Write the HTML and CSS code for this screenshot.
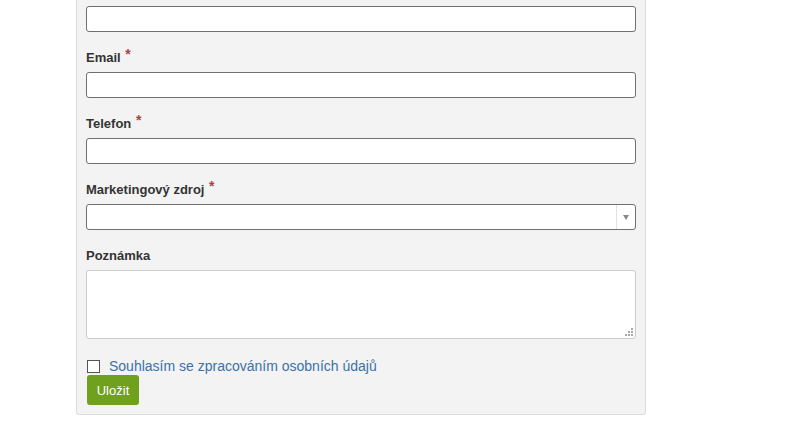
FILE: index.html
```html
<!DOCTYPE html>
<html lang="cs">
<head>
<meta charset="utf-8">
<link rel="stylesheet" href="styles.css">
</head>
<body>
<div class="page">
  <form class="panel">
    <div class="group first">
      <input class="field" type="text">
    </div>
    <div class="group">
      <label class="lbl">Email <span class="req">*</span></label>
      <input class="field" type="text">
    </div>
    <div class="group">
      <label class="lbl">Telefon <span class="req">*</span></label>
      <input class="field" type="text">
    </div>
    <div class="group">
      <label class="lbl">Marketingový zdroj <span class="req">*</span></label>
      <div class="select">
        <span class="select-arrow"><span class="tri"></span></span>
      </div>
    </div>
    <div class="group">
      <label class="lbl">Poznámka</label>
      <div class="area-wrap">
        <textarea class="area"></textarea>
        <span class="grip"></span>
      </div>
    </div>
    <div class="check-row">
      <input class="cb" type="checkbox" id="agree">
      <label class="cb-lbl" for="agree">Souhlasím se zpracováním osobních údajů</label>
    </div>
    <button class="btn" type="button">Uložit</button>
  </form>
</div>
</body>
</html>
```
FILE: styles.css
```css
html, body {
  margin: 0;
  padding: 0;
  background: #ffffff;
  font-family: "Liberation Sans", Arial, sans-serif;
}
.page {
  padding-left: 76px;
}
.panel {
  width: 549px;
  background: #f3f3f3;
  border: 1px solid #dddddd;
  border-top: none;
  border-radius: 0 0 3px 3px;
  padding: 6px 10px 9px 9px;
  display: flex;
  flex-direction: column;
  align-items: flex-start;
}
.group {
  width: 100%;
  display: flex;
  flex-direction: column;
  margin-bottom: 17px;
}
.lbl {
  font-size: 13px;
  font-weight: bold;
  color: #333333;
  line-height: 18px;
  height: 18px;
  margin-bottom: 5px;
}
.req {
  color: #a94442;
  position: relative;
  top: -3px;
  margin-left: 1px;
  font-size: 14px;
  line-height: 0;
}
.field {
  box-sizing: border-box;
  width: 550px;
  height: 26px;
  margin: 0;
  border: 1px solid #707070;
  border-radius: 3px;
  background: #ffffff;
  padding: 2px 6px;
  font: 13px "Liberation Sans", Arial, sans-serif;
}
.select {
  box-sizing: border-box;
  width: 550px;
  height: 26px;
  border: 1px solid #707070;
  border-radius: 3px;
  background: #ffffff;
  display: flex;
  justify-content: flex-end;
}
.select-arrow {
  width: 18px;
  border-left: 1px solid #e2e2e2;
  display: flex;
  align-items: center;
  justify-content: center;
}
.tri {
  width: 0;
  height: 0;
  border-left: 3px solid transparent;
  border-right: 3px solid transparent;
  border-top: 5px solid #888888;
}
.area-wrap {
  position: relative;
  width: 550px;
  height: 69px;
}
.area {
  box-sizing: border-box;
  width: 550px;
  height: 69px;
  margin: 0;
  border: 1px solid #cccccc;
  border-radius: 3px;
  background: #ffffff;
  display: block;
  resize: none;
}
.grip {
  position: absolute;
  right: 3px;
  bottom: 3px;
  width: 8px;
  height: 8px;
  background:
    linear-gradient(#a8a8a8, #a8a8a8) 6px 0 / 2px 2px no-repeat,
    linear-gradient(#a8a8a8, #a8a8a8) 3px 3px / 2px 2px no-repeat,
    linear-gradient(#a8a8a8, #a8a8a8) 6px 3px / 2px 2px no-repeat,
    linear-gradient(#a8a8a8, #a8a8a8) 0 6px / 2px 2px no-repeat,
    linear-gradient(#a8a8a8, #a8a8a8) 3px 6px / 2px 2px no-repeat,
    linear-gradient(#a8a8a8, #a8a8a8) 6px 6px / 2px 2px no-repeat;
}
.check-row {
  display: flex;
  align-items: center;
  height: 18px;
  margin-top: 1px;
}
.cb {
  appearance: none;
  -webkit-appearance: none;
  box-sizing: border-box;
  width: 13px;
  height: 13px;
  margin: 0 9px 0 1px;
  border: 1px solid #555555;
  background: #ffffff;
  border-radius: 0;
}
.cb-lbl {
  font-size: 14px;
  color: #3a72a5;
  line-height: 18px;
}
.btn {
  height: 30px;
  width: 52px;
  margin: 0 0 0 1px;
  padding: 0;
  border: none;
  border-radius: 3px;
  background: #6fa01e;
  color: #ffffff;
  font: 13px "Liberation Sans", Arial, sans-serif;
}
```
